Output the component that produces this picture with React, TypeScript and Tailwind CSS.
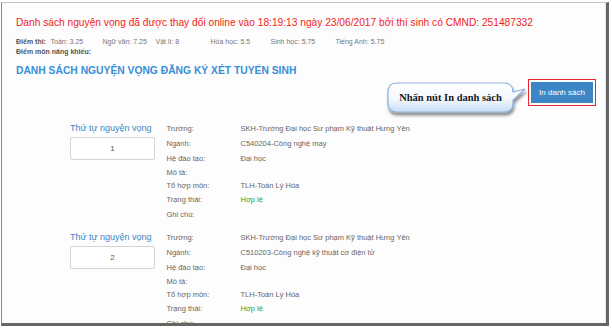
import React from "react";

const scores = [
  { label: "Toán:", value: "3.25", w: "w-[52px]" },
  { label: "Ngữ văn:", value: "7.25", w: "w-[53px]" },
  { label: "Vật lí:", value: "8", w: "w-[55px]" },
  { label: "Hóa học:", value: "5.5", w: "w-[60px]" },
  { label: "Sinh học:", value: "5.75", w: "w-[65px]" },
  { label: "Tiếng Anh:", value: "5.75", w: "w-[56px]" },
];

interface Choice {
  order: number;
  school: string;
  major: string;
  level: string;
  combo: string;
  status: string;
}

const choices: Choice[] = [
  {
    order: 1,
    school: "SKH-Trường Đại học Sư phạm Kỹ thuật Hưng Yên",
    major: "C540204-Công nghệ may",
    level: "Đại học",
    combo: "TLH-Toán Lý Hóa",
    status: "Hợp lệ",
  },
  {
    order: 2,
    school: "SKH-Trường Đại học Sư phạm Kỹ thuật Hưng Yên",
    major: "C510203-Công nghệ kỹ thuật cơ điện tử",
    level: "Đại học",
    combo: "TLH-Toán Lý Hóa",
    status: "Hợp lệ",
  },
];

function Callout() {
  return (
    <div className="absolute left-[-143px] top-[-1px] w-[146px] h-[40px]">
      <svg width="146" height="40" viewBox="0 0 146 40" className="absolute inset-0">
        <defs>
          <linearGradient id="bubbleFill" x1="0" y1="0" x2="0" y2="1">
            <stop offset="0" stopColor="#ffffff" />
            <stop offset="0.55" stopColor="#f4f8fd" />
            <stop offset="1" stopColor="#c9def4" />
          </linearGradient>
          <filter id="bubbleShadow" x="-10%" y="-10%" width="130%" height="150%">
            <feDropShadow dx="1" dy="3" stdDeviation="1.5" floodColor="#000" floodOpacity="0.45" />
          </filter>
        </defs>
        <path
          d="M11,4 H118 Q127,4 127,13 L139,10 L127,21 V24 Q127,33 118,33 H11 Q2,33 2,24 V13 Q2,4 11,4 Z"
          fill="url(#bubbleFill)"
          stroke="#8db4de"
          strokeWidth="1.2"
          filter="url(#bubbleShadow)"
        />
      </svg>
      <div className="absolute left-[2px] top-[4px] w-[125px] h-[29px] flex items-center justify-center font-['Liberation_Serif',serif] font-bold text-[10.5px] text-[#1a1a1a]">
        Nhấn nút In danh sách
      </div>
    </div>
  );
}

function ChoiceBlock({ c }: { c: Choice }) {
  const rows: { label: string; value?: string; h: string; green?: boolean }[] = [
    { label: "Trường:", value: c.school, h: "h-[15px]" },
    { label: "Ngành:", value: c.major, h: "h-[15px]" },
    { label: "Hệ đào tạo:", value: c.level, h: "h-[15px]" },
    { label: "Mô tả:", h: "h-[12px]" },
    { label: "Tổ hợp môn:", value: c.combo, h: "h-[14px]" },
    { label: "Trạng thái:", value: c.status, h: "h-[15px]", green: true },
    { label: "Ghi chú:", h: "h-[15px]" },
  ];
  return (
    <div className="flex">
      <div className="w-[85px] mr-[11.5px]">
        <div className="h-[15px] flex items-center text-[9px] text-[#3a86c8] whitespace-nowrap">
          Thứ tự nguyện vọng
        </div>
        <div className="mt-[0.5px] h-[23px] border border-[#d4d4d4] rounded-[2px] bg-white flex items-center justify-center text-[8px] text-[#555]">
          {c.order}
        </div>
      </div>
      <div className="flex flex-col">
        {rows.map((r) => (
          <div key={r.label} className={`flex items-center text-[7.5px] whitespace-nowrap ${r.h}`}>
            <div className="w-[74px] text-[#666]">{r.label}</div>
            <div className={r.green ? "text-[#2aa52a]" : "text-[#666]"}>{r.value}</div>
          </div>
        ))}
      </div>
    </div>
  );
}

export default function App() {
  return (
    <div className="w-[612px] h-[330px] bg-white font-['Liberation_Sans',Arial,sans-serif] overflow-hidden">
      <div className="ml-[1px] mt-[2px] w-[608px] h-[324px] border-l-[1.5px] border-l-[#8a8a8a] border-t border-t-[#c4c4c4] border-r-[3px] border-r-[#666] border-b-[3px] border-b-[#666] bg-[#fdfdfd] overflow-hidden">
        <div className="h-full border-r border-r-[#e6e6e6] pl-[14px] pr-[9px]">
          <div className="pt-[14px] text-[10.2px] leading-[12px] text-[#f21c1c] whitespace-nowrap">
            Danh sách nguyện vọng đã được thay đổi online vào 18:19:13 ngày 23/06/2017 bởi thí sinh có CMND: 251487332
          </div>
          <div className="mt-[8px] flex text-[7px] leading-[10px] text-[#777] whitespace-nowrap">
            <span className="w-[34.5px] font-bold text-[#555]">Điểm thi:</span>
            {scores.map((s) => (
              <span key={s.label} className={s.w}>
                {s.label} {s.value}
              </span>
            ))}
          </div>
          <div className="text-[7px] leading-[10px] font-bold text-[#555]">Điểm môn năng khiếu:</div>
          <div className="mt-[8px] text-[10.3px] leading-[12px] font-bold text-[#3a8ed6] whitespace-nowrap">
            DANH SÁCH NGUYỆN VỌNG ĐĂNG KÝ XÉT TUYỂN SINH
          </div>
          <div className="mt-[2px] flex justify-end">
            <div className="relative border-[1.5px] border-[#e8282c] p-[2px]">
              <Callout />
              <div className="w-[62px] h-[21px] bg-[#3d86c6] flex items-center justify-center text-[8px] text-white">
                In danh sách
              </div>
            </div>
          </div>
          <div className="mt-[15.5px] ml-[54px] flex flex-col gap-[8px]">
            {choices.map((c) => (
              <ChoiceBlock key={c.order} c={c} />
            ))}
          </div>
        </div>
      </div>
    </div>
  );
}
